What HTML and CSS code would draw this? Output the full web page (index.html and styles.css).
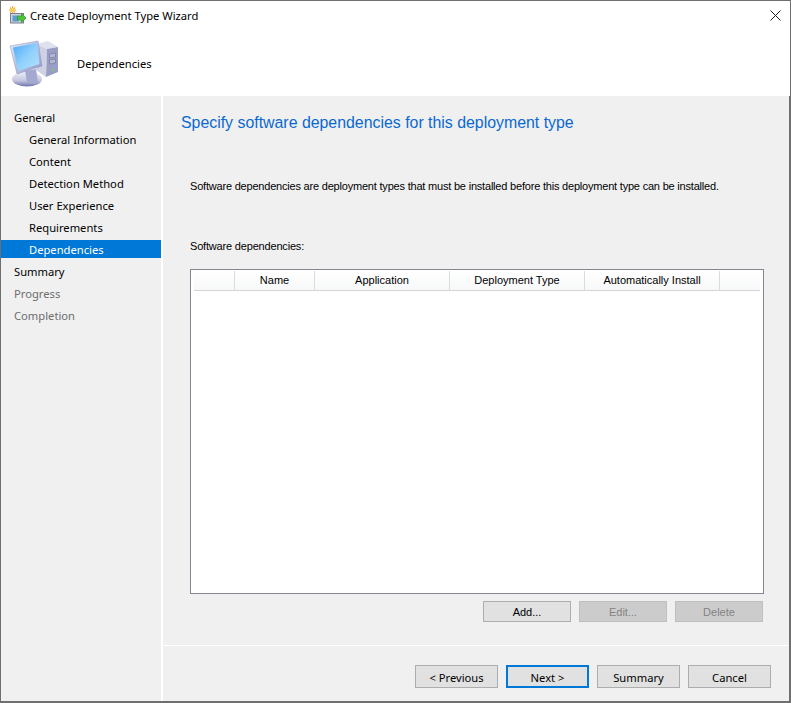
FILE: index.html
```html
<!DOCTYPE html>
<html lang="en">
<head>
<meta charset="utf-8">
<title>Create Deployment Type Wizard</title>
<link rel="stylesheet" href="styles.css">
</head>
<body>
<div class="window">
  <div class="titlebar">
    <svg class="title-icon" width="20" height="20" viewBox="0 0 20 20">
      <path d="M3.500 0v2.200M3.500 8V5.800M0 4h2.200M7 4H4.800M1 1.500l1.600 1.600M6 1.500L4.400 3.100M1 6.500l1.600-1.600M6 6.500L4.400 4.900" stroke="#f5a623" stroke-width="1.100" fill="none"/>
      <circle cx="3.500" cy="4" r="1.500" fill="#ffc93c"/>
      <rect x="1.500" y="7.500" width="13" height="9.500" fill="#cdd0d6" stroke="#77808c"/>
      <rect x="3.500" y="9.500" width="6" height="6" fill="#5d9ad6"/>
      <path d="M8.500 10h4V7.500l4.500 4.500-4.500 4.500V14h-4z" fill="#4cc53a" stroke="#2f9a2c" stroke-width=".8"/>
    </svg>
    <span class="title-text">Create Deployment Type Wizard</span>
    <svg class="close-icon" width="11" height="11" viewBox="0 0 11 11">
      <path d="M.5.500l10 10M10.500.500l-10 10" stroke="#1a1a1a" stroke-width="1" fill="none"/>
    </svg>
  </div>
  <div class="header">
    <svg class="computer-icon" width="50" height="50" viewBox="0 0 50 50">
      <defs>
        <linearGradient id="screen" x1="0" y1="0" x2="1" y2="1">
          <stop offset="0" stop-color="#4aa8f5"/>
          <stop offset=".5" stop-color="#8fd0fc"/>
          <stop offset="1" stop-color="#b5e2fd"/>
        </linearGradient>
        <linearGradient id="bezel" x1="0" y1="0" x2="1" y2="1">
          <stop offset="0" stop-color="#e8ebf6"/>
          <stop offset="1" stop-color="#8d94c4"/>
        </linearGradient>
        <linearGradient id="foot" x1="0" y1="0" x2="0" y2="1">
          <stop offset="0" stop-color="#f1f2f9"/>
          <stop offset=".6" stop-color="#c3c6e0"/>
          <stop offset="1" stop-color="#6f74ad"/>
        </linearGradient>
      </defs>
      <path d="M28 5l11-3 10 6-11 2z" fill="#dfe1ee"/>
      <path d="M28 5l10 5-1 28-10-7z" fill="#cfd2e4"/>
      <path d="M38 10l11-2v25l-12 5z" fill="#9a9dc4"/>
      <path d="M40.500 15l6-1v4l-6 1zM40.500 21l6-1v4l-6 1z" fill="#b4b7d3" stroke="#6f7399" stroke-width=".6"/>
      <rect x="43" y="30" width="2" height="2" fill="#6fd06a"/>
      <ellipse cx="18" cy="40" rx="15" ry="7.500" fill="url(#foot)"/>
      <path d="M16 32l11-2 2 13c-3 2-8 2-11 0z" fill="#a5a9d0"/>
      <path d="M1 7L29 2l4 25-25 8z" fill="url(#bezel)" stroke="#8d94c4" stroke-width=".5"/>
      <path d="M4 8.500L28 4l2.500 21L9 32z" fill="url(#screen)"/>
    </svg>
    <span class="header-text">Dependencies</span>
  </div>
  <div class="body">
    <nav class="nav">
      <div class="nav-item">General</div>
      <div class="nav-item sub">General Information</div>
      <div class="nav-item sub">Content</div>
      <div class="nav-item sub">Detection Method</div>
      <div class="nav-item sub">User Experience</div>
      <div class="nav-item sub">Requirements</div>
      <div class="nav-item sub active"><span class="nav-band">Dependencies</span></div>
      <div class="nav-item">Summary</div>
      <div class="nav-item muted">Progress</div>
      <div class="nav-item muted">Completion</div>
    </nav>
    <main class="content">
      <section class="page">
        <h1 class="page-title">Specify software dependencies for this deployment type</h1>
        <p class="intro">Software dependencies are deployment types that must be installed before this deployment type can be installed.</p>
        <p class="list-label">Software dependencies:</p>
        <div class="list">
          <div class="list-head">
            <div class="col c0"></div>
            <div class="col c1">Name</div>
            <div class="col c2">Application</div>
            <div class="col c3">Deployment Type</div>
            <div class="col c4">Automatically Install</div>
            <div class="col c5"></div>
          </div>
        </div>
        <div class="list-actions">
          <button class="btn small">Add...</button>
          <button class="btn small" disabled>Edit...</button>
          <button class="btn small" disabled>Delete</button>
        </div>
      </section>
      <footer class="footer">
        <button class="btn wide">&lt; Previous</button>
        <button class="btn wide primary">Next &gt;</button>
        <button class="btn wide">Summary</button>
        <button class="btn wide">Cancel</button>
      </footer>
    </main>
  </div>
</div>
</body>
</html>
```
FILE: styles.css
```css
* { box-sizing: border-box; }
html, body { margin: 0; padding: 0; }
body {
  width: 791px;
  height: 703px;
  overflow: hidden;
  font-family: "Noto Sans", "Open Sans", sans-serif;
  font-size: 11.2px;
  color: #000;
}
.window {
  width: 791px;
  height: 703px;
  display: flex;
  flex-direction: column;
  background: #fff;
  border: 1px solid #6f6f6f;
  border-bottom-width: 2px;
}
.titlebar {
  height: 30px;
  flex: none;
  display: flex;
  align-items: center;
  padding: 0 9px 0 8px;
}
.title-icon { flex: none; margin-top: -1px; }
.title-text { margin-left: 1px; flex: 1; margin-top: -1px; }
.close-icon { flex: none; margin-top: -2px; }
.header {
  height: 65px;
  flex: none;
  display: flex;
  align-items: center;
  padding: 0 0 0 8px;
}
.computer-icon { flex: none; }
.header-text { margin-left: 18px; margin-top: -1px; }
.body { flex: 1; display: flex; min-height: 0; background: #fff; }
.nav {
  width: 160px;
  flex: none;
  padding-top: 11px;
  margin-right: 2px;
  background: #f0f0f0;
}
.nav-item {
  height: 22px;
  line-height: 21px;
  padding-left: 13px;
  white-space: nowrap;
}
.nav-item.sub { padding-left: 28px; }
.nav-item.muted { color: #6d6d6d; }
.nav-item.active { padding: 1px 0 3px; line-height: 19px; }
.nav-band {
  display: block;
  height: 18px;
  padding-left: 28px;
  background: #0078d7;
  color: #fff;
}
.content {
  flex: 1;
  min-width: 0;
  display: flex;
  flex-direction: column;
  background: #f0f0f0;
  border-right: 1px solid #6f6f6f;
}
.page {
  height: 550px;
  flex: none;
  padding: 16px 0 0 18px;
  border-bottom: 1px solid #fff;
  font-family: "Liberation Sans", Arial, sans-serif;
  font-size: 11px;
}
.page-title {
  margin: 0;
  font-size: 15.88px;
  font-weight: 400;
  line-height: 22px;
  color: #0a68d2;
  white-space: nowrap;
}
.intro { margin: 43px 0 0 9px; line-height: 18px; white-space: nowrap; letter-spacing: -0.2px; }
.list-label { margin: 42px 0 0 9px; line-height: 18px; letter-spacing: -0.18px; }
.list {
  width: 574px;
  height: 325px;
  margin: 14px 0 0 9px;
  padding: 1px 3px 0;
  background: #fff;
  border: 1px solid #828790;
}
.list-head {
  display: flex;
  width: 566px;
  height: 20px;
  background: linear-gradient(#fff, #f7f8f9);
  border-bottom: 1px solid #d5d5d5;
}
.col {
  flex: none;
  height: 100%;
  text-align: center;
  line-height: 18px;
  border-right: 1px solid #d9dbdd;
  white-space: nowrap;
}
.c0 { width: 41px; }
.c1 { width: 80px; }
.c2 { width: 135px; }
.c3 { width: 135px; }
.c4 { width: 135px; }
.c5 { flex: 1; border-right: 0; }
.list-actions {
  display: flex;
  justify-content: flex-end;
  gap: 8px;
  width: 574px;
  margin: 7px 0 0 9px;
  padding-right: 1px;
}
.btn {
  font: inherit;
  color: #000;
  background: #e1e1e1;
  border: 1px solid #adadad;
  border-radius: 0;
  padding: 1px 0 0;
}
.btn:disabled { background: #cccccc; border-color: #bfbfbf; color: #838383; }
.btn.small { width: 88px; height: 21px; padding: 0; }
.btn.wide { width: 83px; height: 23px; }
.btn.primary { border: 2px solid #0078d7; }
.footer {
  display: flex;
  gap: 8px;
  padding: 19px 0 0 252px;
}
```
